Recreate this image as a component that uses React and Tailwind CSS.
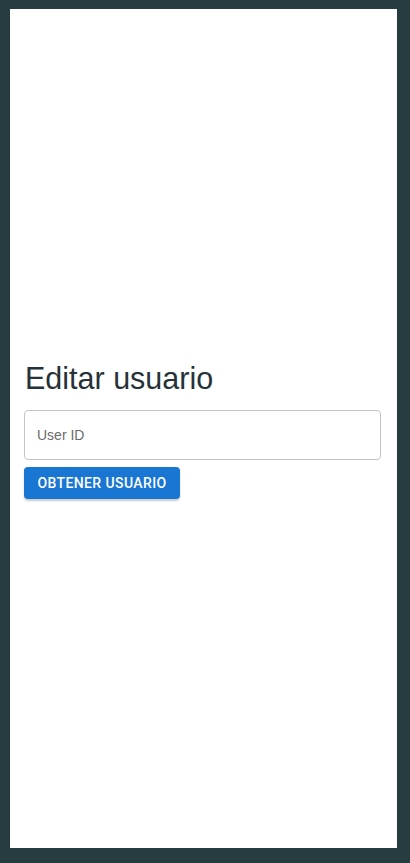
export default function App() {
  return (
    <div className="min-h-[863px] bg-[#263c41] pt-[9px] pl-[10px] pr-[13px] pb-[15px]" style={{ fontFamily: '"Liberation Sans", Arial, sans-serif' }}>
      <div className="h-[839px] bg-white flex flex-col justify-center px-[14px]">
        <div className="w-[357px]">
          <h1 className="text-[30.5px] leading-[40px] text-[#263238] pl-[1px]">Editar usuario</h1>
          <div className="mt-[12px] h-[50px] rounded-[4px] border border-[#c4c4c4] flex items-center px-[12px]">
            <span className="text-[14px] text-[#6b6b6b]">User ID</span>
          </div>
          <button
            className="mt-[7px] h-[32px] w-[156px] rounded-[4px] bg-[#1976d2] text-white text-[14px] font-medium tracking-[0.4px] uppercase shadow-[0_2px_2px_rgba(0,0,0,0.2)]"
            style={{ fontFamily: 'Roboto, "Liberation Sans", sans-serif' }}
          >
            Obtener usuario
          </button>
        </div>
      </div>
    </div>
  );
}
